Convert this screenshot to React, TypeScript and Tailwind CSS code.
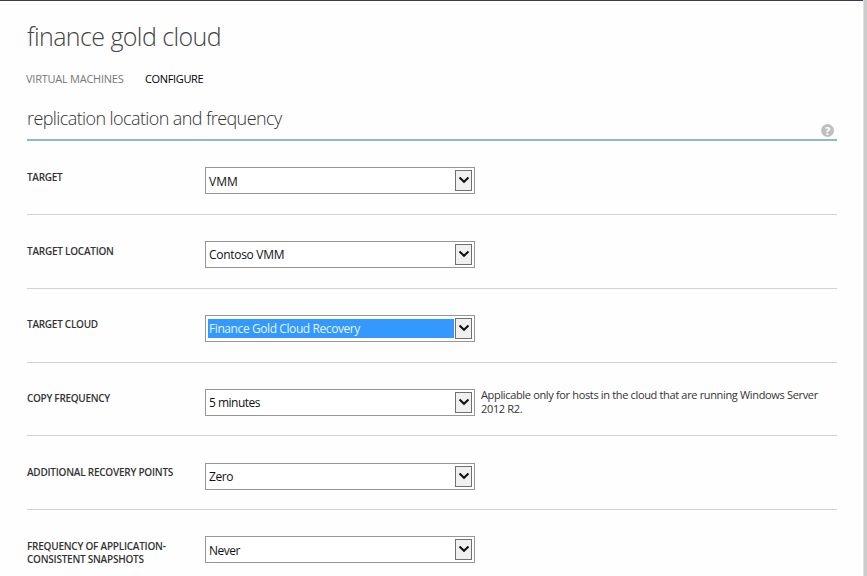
type Row = {
  label: string;
  labelTracking: string;
  value: string;
  valueTracking: string;
  height: string;
  pad: string;
  labelPad: string;
  valuePad: string;
  selected?: boolean;
  note?: boolean;
};

const rows: Row[] = [
  { label: 'TARGET', labelTracking: 'tracking-[-0.3px]', value: 'VMM', valueTracking: 'tracking-[0px]', height: 'h-[74px] border-b', pad: 'pt-[26px]', labelPad: 'pt-[4px]', valuePad: 'pt-[3px]' },
  { label: 'TARGET LOCATION', labelTracking: 'tracking-[-0.25px]', value: 'Contoso VMM', valueTracking: 'tracking-[-0.3px]', height: 'h-[74px] border-b', pad: 'pt-[26px]', labelPad: 'pt-[4px]', valuePad: 'pt-px' },
  { label: 'TARGET CLOUD', labelTracking: 'tracking-[-0.27px]', value: 'Finance Gold Cloud Recovery', valueTracking: 'tracking-[-0.41px]', height: 'h-[74px] border-b', pad: 'pt-[26px]', labelPad: 'pt-[3px]', valuePad: 'pt-px', selected: true },
  { label: 'COPY FREQUENCY', labelTracking: 'tracking-[-0.3px]', value: '5 minutes', valueTracking: 'tracking-[-0.5px]', height: 'h-[73px] border-b', pad: 'pt-[26px]', labelPad: 'pt-[3px]', valuePad: 'pt-px', note: true },
  { label: 'ADDITIONAL RECOVERY POINTS', labelTracking: 'tracking-[-0.24px]', value: 'Zero', valueTracking: 'tracking-[-0.4px]', height: 'h-[74px] border-b', pad: 'pt-[27px]', labelPad: 'pt-[3px]', valuePad: 'pt-px' },
  { label: 'FREQUENCY OF APPLICATION-\nCONSISTENT SNAPSHOTS', labelTracking: 'tracking-[-0.24px]', value: 'Never', valueTracking: 'tracking-[-0.5px]', height: 'h-[66px]', pad: 'pt-[26px]', labelPad: 'pt-[4px]', valuePad: 'pt-[3px]' },
];

function Select({ row }: { row: Row }) {
  return (
    <div className="flex h-[27px] w-[270px] shrink-0 border border-[#969696] bg-white p-[2px]">
      <div
        className={`my-[1px] mr-px flex flex-1 items-center pl-[1px] text-[12px] leading-none whitespace-nowrap ${row.valuePad} ${row.valueTracking} ${
          row.selected ? 'bg-[#3399ff] text-[#e4f5ff]' : 'text-[#111]'
        }`}
      >
        <span>{row.value}</span>
      </div>
      <div className="flex w-[17px] items-center justify-center border border-[#707070] bg-[#f0f0f0] pb-px">
        <svg width="12" height="8" viewBox="0 0 12 8" fill="none" stroke="#111" strokeWidth="2" className="shrink-0">
          <path d="M1.5 1.5 L6 5.8 L10.5 1.5" />
        </svg>
      </div>
    </div>
  );
}

export default function App() {
  return (
    <div className="flex h-[576px] w-[867px] overflow-hidden bg-[#fefefe] font-['Open_Sans','Noto_Sans',sans-serif]">
      <main className="w-[863px] shrink-0 border-t border-[#3b3947] pr-[26px] pl-[27px]">
        <h1 className="h-[71px] pt-[17px] text-[25px] leading-[36px] font-light tracking-[-0.58px] whitespace-nowrap text-[#444]">
          <span>finance gold cloud</span>
        </h1>
        <nav className="-ml-px flex h-[16px] gap-[21px] text-[11px] leading-[14px] whitespace-nowrap">
          <span className="w-[98px] tracking-[-0.25px] text-[#777]">VIRTUAL MACHINES</span>
          <span className="tracking-[-0.35px] text-black">CONFIGURE</span>
        </nav>
        <div className="flex h-[53px] justify-between border-b-2 border-[#93b5cf]">
          <h2 className="pt-[18px] text-[18px] leading-[24px] font-light tracking-[-0.6px] whitespace-nowrap text-[#333]">
            <span>replication location and frequency</span>
          </h2>
          <div className="mt-[36px] mr-[3px] flex size-[13px] items-center justify-center rounded-full bg-[#bfbfbf] text-[11px] leading-none font-bold text-white">
            ?
          </div>
        </div>
        {rows.map((row) => (
          <section
            key={row.label}
            className={`flex border-[#d2d2d2] ${row.height} ${row.pad}`}
          >
            <div
              className={`w-[178px] shrink-0 text-[10px] leading-[13px] font-semibold whitespace-pre text-[#333] ${row.labelPad} ${row.labelTracking}`}
            >
              <span>{row.label}</span>
            </div>
            <Select row={row} />
            {row.note && (
              <p className="-mt-px pl-[6px] text-[11px] leading-[14px] tracking-[-0.34px] whitespace-nowrap text-[#333]">
                Applicable only for hosts in the cloud that are running Windows Server
                <br />
                2012 R2.
              </p>
            )}
          </section>
        ))}
      </main>
      <div className="w-[4px] shrink-0 border-l border-[#dedede] bg-[#cccccc]" />
    </div>
  );
}
